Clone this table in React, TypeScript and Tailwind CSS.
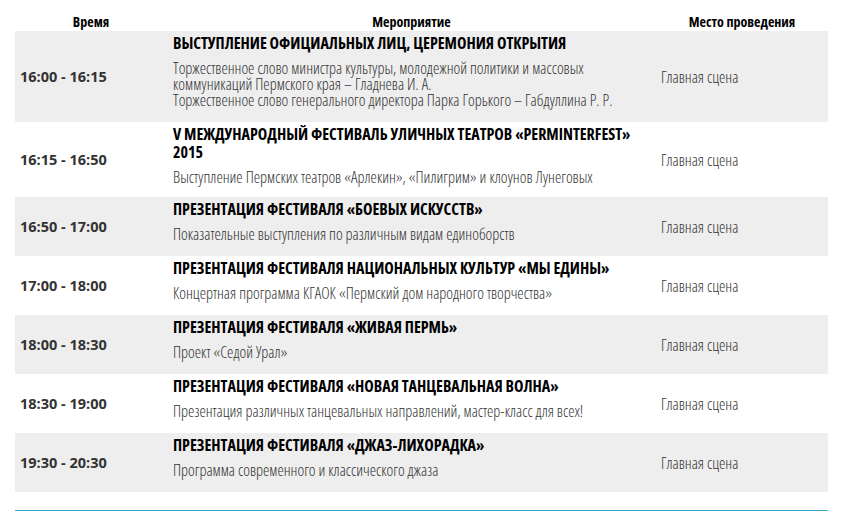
import React from 'react';

// Программа мероприятий
const rows = [
  {
    time: '16:00 - 16:15',
    title: 'Выступление официальных лиц, церемония открытия',
    text: [
      'Торжественное слово министра культуры, молодежной политики и массовых коммуникаций Пермского края – Гладнева И. А.',
      'Торжественное слово генерального директора Парка Горького – Габдуллина Р. Р.',
    ],
    h: 'h-[91px]',
  },
  {
    time: '16:15 - 16:50',
    title: 'V Международный фестиваль уличных театров «PERMINTERFEST» 2015',
    text: ['Выступление Пермских театров «Арлекин», «Пилигрим» и клоунов Лунеговых'],
    h: 'h-[75px]',
  },
  {
    time: '16:50 - 17:00',
    title: 'Презентация фестиваля «Боевых искусств»',
    text: ['Показательные выступления по различным видам единоборств'],
    h: 'h-[59px]',
  },
  {
    time: '17:00 - 18:00',
    title: 'Презентация фестиваля национальных культур «Мы едины»',
    text: ['Концертная программа КГАОК «Пермский дом народного творчества»'],
    h: 'h-[59px]',
  },
  {
    time: '18:00 - 18:30',
    title: 'Презентация фестиваля «Живая Пермь»',
    text: ['Проект «Седой Урал»'],
    h: 'h-[59px]',
  },
  {
    time: '18:30 - 19:00',
    title: 'Презентация фестиваля «Новая танцевальная волна»',
    text: ['Презентация различных танцевальных направлений, мастер-класс для всех!'],
    h: 'h-[59px]',
  },
  {
    time: '19:30 - 20:30',
    title: 'Презентация фестиваля «Джаз-лихорадка»',
    text: ['Программа современного и классического джаза'],
    h: 'h-[59px]',
  },
];

export default function App() {
  return (
    <div className="w-[850px] h-[519px] bg-white pt-[13px] px-[15px] font-['Open_Sans',sans-serif]">
      <table className="w-[813px] table-fixed border-collapse">
        <colgroup>
          <col className="w-[152px]" />
          <col className="w-[489px]" />
          <col className="w-[172px]" />
        </colgroup>
        <thead>
          <tr className="h-[18px] text-[14px] font-bold text-black font-stretch-condensed">
            <th className="text-center leading-[18px]">Время</th>
            <th className="text-center leading-[18px]">Мероприятие</th>
            <th className="text-center leading-[18px]">Место проведения</th>
          </tr>
        </thead>
        <tbody>
          {rows.map((r, i) => (
            <tr key={r.time} className={`${r.h} ${i % 2 === 0 ? 'bg-[#eeeeee]' : 'bg-white'}`}>
              <td className="pl-[5px] align-middle text-[14.5px] font-bold text-[#333333]">
                {r.time}
              </td>
              <td className="pl-[6px] pr-[20px] pt-[3px] align-top">
                <div className="text-[16px] leading-[18px] font-bold uppercase text-black font-stretch-condensed">
                  {r.title}
                </div>
                <div className="mt-[8px] text-[16px] leading-[16px] font-light text-[#333333] font-stretch-condensed">
                  {r.text.map((t) => (
                    <div key={t}>{t}</div>
                  ))}
                </div>
              </td>
              <td className="pl-[5px] align-middle text-[16px] font-light text-[#333333] font-stretch-condensed">
                Главная сцена
              </td>
            </tr>
          ))}
        </tbody>
      </table>
      <div className="mt-[18px] h-px w-[813px] bg-[#3aa8d2]" />
    </div>
  );
}
